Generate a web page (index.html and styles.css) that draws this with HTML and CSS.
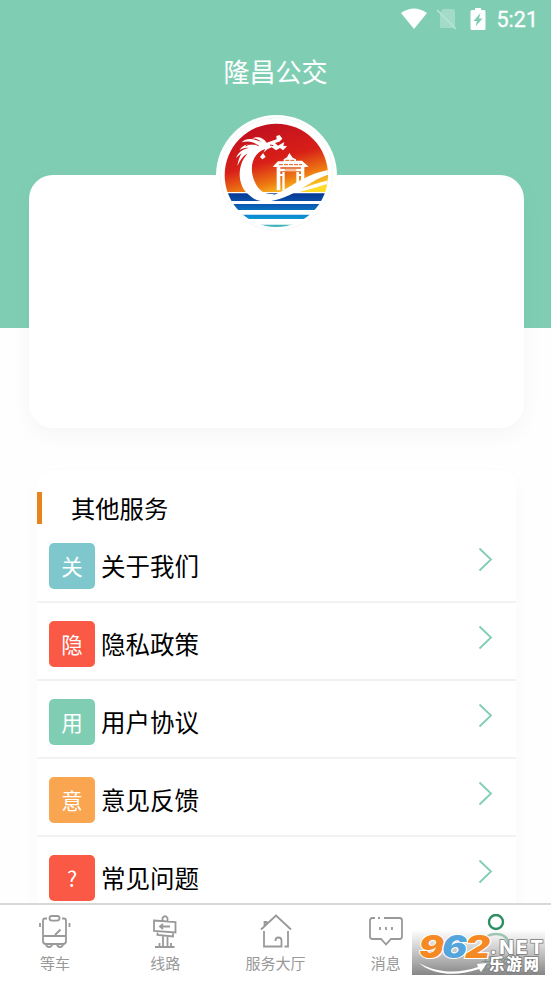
FILE: index.html
```html
<!DOCTYPE html>
<html lang="zh-CN">
<head>
    <meta charset="UTF-8">
    <meta name="viewport" content="width=device-width, initial-scale=1.0">
    <title>隆昌公交</title>
    <link rel="stylesheet" href="styles.css">
</head>
<body>
    <div class="page">
        <header class="header">
            <div class="status-bar">
                <svg class="wifi" width="28" height="22" viewBox="0 0 28 22"><path d="M1 5Q14-4 27 5L14 21Z" fill="#fff"/></svg>
                <svg class="sim" width="21" height="24" viewBox="0 0 21 24"><path d="M7 2H17Q19 2 19 4V21H4V6Z" fill="#fff" opacity=".28"/><path d="M1 3L20 22" stroke="#b9e4d3" stroke-width="1.6"/></svg>
                <svg class="battery" width="16" height="24" viewBox="0 0 16 24"><path d="M5 1H11V3H14Q15.500 3 15.500 4.500V21.500Q15.500 23 14 23H2Q.5 23 .5 21.500V4.500Q.5 3 2 3H5Z" fill="#fff"/><path d="M10.500 6L3.500 14H7L5.500 19.500L12.500 11.500H9Z" fill="#7fceb3"/></svg>
                <span class="time">5:21</span>
            </div>
            <h1>隆昌公交</h1>
        </header>

        <section class="card">
            <div class="avatar">
                <svg width="121" height="121" viewBox="30 195 363 363">
                    <defs>
                        <linearGradient id="sky" gradientUnits="userSpaceOnUse" x1="180" y1="215" x2="242" y2="440">
                            <stop offset="0" stop-color="#c01020"/>
                            <stop offset=".5" stop-color="#d81f18"/>
                            <stop offset=".78" stop-color="#ee7a12"/>
                            <stop offset="1" stop-color="#ffdc28"/>
                        </linearGradient>
                        <linearGradient id="sea" gradientUnits="userSpaceOnUse" x1="0" y1="430" x2="0" y2="535">
                            <stop offset="0" stop-color="#073a96"/>
                            <stop offset=".3" stop-color="#0a55ae"/>
                            <stop offset=".7" stop-color="#0a94d4"/>
                            <stop offset="1" stop-color="#4fbfae"/>
                        </linearGradient>
                        <clipPath id="round"><circle cx="211" cy="376" r="155"/></clipPath>
                    </defs>
                    <circle cx="211" cy="372" r="169" fill="none" stroke="#e3f1ec" stroke-width="1.500"/>
                    <g clip-path="url(#round)">
                        <path d="M50 210H380V426H50Z" fill="url(#sky)"/>
                        <path d="M50 430H380V453H50ZM50 462H380V480H50ZM50 494H380V507H50ZM50 524H380V540H50Z" fill="url(#sea)"/>
                        <!-- gate -->
                        <path d="M250 309L260 323L270 328V332H288L308 350L292 352H220L200 350L216 334H233V328L243 322ZM212 352H223V421H212ZM229 366H236V421H229ZM271 366H279V417H271ZM285 352H295V402H285ZM220 356H288V364H220ZM213 372H236V378H213ZM271 372H295V378H271Z" fill="#fff"/>
                        <path d="M238 331H265M219 344H288" stroke="#e15a16" stroke-width="3" stroke-dasharray="12 3"/>
                        <path d="M236 360H271" stroke="#e66a14" stroke-width="2.500"/>
                        <!-- waves -->
                        <path d="M120 420C142 446 183 444 219 428C268 402 315 365 380 358V371C328 381 282 426 235 442C188 461 145 461 120 424Z" fill="#fff"/>
                        <path d="M235 424C280 421 323 400 380 388V399C333 407 288 432 228 431Z" fill="#fff"/>
                        <!-- dragon -->
                        <path d="M178 297C138 308 127 358 148 399C158 421 178 436 206 431C182 453 145 452 119 425C92 393 97 339 124 312C113 315 105 327 94 348C97 331 100 320 108 310C101 314 95 319 90 324C96 307 110 298 128 294C119 291 109 295 100 301C111 281 131 282 151 283C142 275 125 272 107 277C122 262 146 267 164 275C158 267 147 266 138 265C158 258 172 264 182 278L212 268L211 258L221 255L229 266L220 275L207 279L216 287L235 276L232 287L243 289L231 301L222 294L210 301L197 292L184 298L171 309L179 321L169 328L162 321L172 308Z" fill="#fff"/>
                        <path d="M119 288C130 280 145 281 158 287M192 285L202 287" fill="none" stroke="#c91820" stroke-width="3"/>
                    </g>
                </svg>
            </div>
        </section>

        <section class="services">
            <h2>其他服务</h2>
            <ul>
                <li><span class="tag teal">关</span><span class="name">关于我们</span><svg class="arrow" width="15" height="25" viewBox="0 0 15 25"><path d="M1.500 1.500L13 12.500L1.500 23.500"/></svg></li>
                <li><span class="tag red">隐</span><span class="name">隐私政策</span><svg class="arrow" width="15" height="25" viewBox="0 0 15 25"><path d="M1.500 1.500L13 12.500L1.500 23.500"/></svg></li>
                <li><span class="tag green">用</span><span class="name">用户协议</span><svg class="arrow" width="15" height="25" viewBox="0 0 15 25"><path d="M1.500 1.500L13 12.500L1.500 23.500"/></svg></li>
                <li><span class="tag orange">意</span><span class="name">意见反馈</span><svg class="arrow" width="15" height="25" viewBox="0 0 15 25"><path d="M1.500 1.500L13 12.500L1.500 23.500"/></svg></li>
                <li><span class="tag red">?</span><span class="name">常见问题</span><svg class="arrow" width="15" height="25" viewBox="0 0 15 25"><path d="M1.500 1.500L13 12.500L1.500 23.500"/></svg></li>
            </ul>
        </section>

        <nav class="tabs">
            <a class="tab">
                <svg width="36" height="36" viewBox="0 0 36 36"><path d="M10 4.500H8Q6 4.500 6 6.500V27Q6 30 9 30H26Q29 30 29 27V6.500Q29 4.500 27 4.500H25M15 2H20Q22.500 2 22.500 4.300T20 6.600H15Q12.500 6.600 12.500 4.300T15 2ZM6 22H29M18 21L23.500 15.500M3 9V13M32.500 9V13M9 30Q9.500 33 12 33T15.500 30M20 30Q20.500 33 23 33T26.500 30"/></svg>
                <span>等车</span>
            </a>
            <a class="tab">
                <svg width="36" height="36" viewBox="0 0 36 36"><path d="M7 6.500L28.500 8V18.500L7 17ZM15.500 6.500V4Q18 .5 20.500 4V7M10.500 17.500V21L26 22.500V18.500M16 22V33M20.500 23V33M8 33H27.500M12.500 33V29M24 33V29M23 12.500H13M16 10L13 12.500L16 15"/></svg>
                <span>线路</span>
            </a>
            <a class="tab">
                <svg width="36" height="36" viewBox="0 0 36 36"><path d="M3 15.500L18 1.500L33 15.500M6.500 12V8H8.500V10M6 17V32.500H23.500V26.500Q23.500 23.500 20.500 23.500T17.500 26.500V27M30 17V32.500H26.500"/></svg>
                <span>服务大厅</span>
            </a>
            <a class="tab">
                <svg width="36" height="36" viewBox="0 0 36 36"><path d="M7 4H4.500Q2 4 2 6.500V22.500Q2 25 4.500 25H13L18 30.500L23 25H31.500Q34 25 34 22.500V6.500Q34 4 31.500 4H16M10 4H12M12 13V16M18 13V16M24 13V16"/></svg>
                <span>消息</span>
            </a>
            <a class="tab active">
                <svg width="36" height="36" viewBox="0 0 36 36"><circle cx="18" cy="8" r="7"/><path d="M5 34Q5 20 18 20T31 34" opacity=".45"/></svg>
                <span>我的</span>
            </a>
        </nav>

        <div class="watermark">
            <svg width="137" height="65" viewBox="0 0 137 65">
                <defs>
                    <linearGradient id="shade" x1="0" y1="0" x2="0" y2="1">
                        <stop offset="0" stop-color="#888" stop-opacity="0"/>
                        <stop offset="1" stop-color="#808080" stop-opacity=".95"/>
                    </linearGradient>
                </defs>
                <rect y="20" width="133" height="45" fill="url(#shade)"/>
                <path d="M7 53C25 63 46 64 66 57L65 54L75 53L69 62L67 59C45 67 20 65 7 53Z" fill="#fff"/>
                <g class="mark-num">
                    <text x="7" y="48" textLength="25" lengthAdjust="spacingAndGlyphs" fill="#f58a24">9</text>
                    <text x="30" y="48" textLength="25" lengthAdjust="spacingAndGlyphs" fill="#55a5dd">6</text>
                    <text x="53" y="48" textLength="25" lengthAdjust="spacingAndGlyphs" fill="#f58a24">2</text>
                </g>
                <text class="mark-net" x="78" y="44" textLength="53" lengthAdjust="spacing">.NET</text>
                <text class="mark-cn" x="77" y="60" textLength="50">乐游网</text>
            </svg>
        </div>
    </div>
</body>
</html>
```
FILE: styles.css
```css
* {
    box-sizing: border-box;
}
body {
    margin: 0;
    background: #fff;
    color: #000;
    font-family: "Noto Sans CJK SC", sans-serif;
}
.page {
    position: relative;
    display: flex;
    flex-direction: column;
    height: 981px;
    overflow: hidden;
    background: #fefefe;
}
.header {
    flex: none;
    height: 328px;
    background: #7fceb3;
    color: #fff;
}
.status-bar {
    display: flex;
    align-items: center;
    justify-content: flex-end;
    height: 38px;
    padding-right: 13px;
}
.sim {
    margin-left: 8px;
}
.battery {
    margin-left: 13px;
}
.time {
    margin-left: 11px;
    padding-top: 2px;
    font: 400 21.5px/38px Roboto, sans-serif;
    -webkit-text-stroke: 0.3px #fff;
}
h1 {
    margin: 15px 0 0;
    font-size: 26px;
    font-weight: 400;
    line-height: 36px;
    text-align: center;
}
.card {
    flex: none;
    display: flex;
    justify-content: center;
    height: 253px;
    margin: -153px 27px 0 29px;
    border-radius: 24px;
    background: #fff;
    box-shadow: 0 6px 22px rgba(0, 0, 0, 0.04);
}
.avatar {
    width: 121px;
    height: 121px;
    margin-top: -60px;
    border-radius: 50%;
    background: #fff;
}
.avatar svg {
    display: block;
}
.services {
    flex: 1;
    min-height: 0;
    margin: 43px 35px 0 37px;
    padding-top: 21px;
    border-radius: 14px 14px 0 0;
    background: #fff;
    box-shadow: 0 6px 20px rgba(0, 0, 0, 0.025);
}
h2 {
    height: 32px;
    margin: 0;
    padding-left: 29px;
    border-left: 5px solid #e8821b;
    font-size: 24.3px;
    font-weight: 400;
    line-height: 31px;
}
ul {
    margin: 0;
    padding: 1px 0 0;
    list-style: none;
}
li {
    display: flex;
    height: 78px;
    padding: 18px 23px 0 12px;
    border-bottom: 2px solid #f2f2f2;
}
.tag {
    width: 46px;
    height: 46px;
    border-radius: 5px;
    color: #fff;
    font-size: 21.5px;
    line-height: 45px;
    text-align: center;
}
.teal {
    background: #7ec8cd;
}
.red {
    background: #f95945;
}
.green {
    background: #7fceb3;
}
.orange {
    background: #faa550;
}
.name {
    flex: 1;
    padding-left: 6px;
    font-size: 24.5px;
    line-height: 45px;
}
.arrow {
    margin-top: 4px;
    fill: none;
    stroke: #7fceb3;
    stroke-width: 1.8;
}
.tabs {
    z-index: 1;
    flex: none;
    display: flex;
    height: 78px;
    border-top: 2px solid #d8d8d8;
    background: #fff;
}
.tab {
    flex: 1;
    display: flex;
    flex-direction: column;
    align-items: center;
    padding-top: 9px;
    color: #999;
    font-size: 15px;
    line-height: 20px;
}
.tab svg {
    margin-bottom: 3px;
    fill: none;
    stroke: #999;
    stroke-width: 1.8;
}
.tab.active {
    color: #6fae90;
}
.tab.active svg {
    stroke: #2f8d62;
    stroke-width: 2.4;
}
.watermark {
    position: absolute;
    z-index: 2;
    left: 412px;
    top: 910px;
    width: 137px;
    height: 65px;
}
.mark-num {
    font: italic 900 31px Inter, sans-serif;
    stroke: #fff;
    stroke-width: 2px;
    paint-order: stroke;
}
.mark-net {
    font: 800 19px Inter, sans-serif;
    fill: #fff;
    stroke: #777;
    stroke-width: 1.5px;
    paint-order: stroke;
}
.mark-cn {
    font: 900 15.5px "Noto Sans CJK SC", sans-serif;
    fill: #fff;
    stroke: #777;
    stroke-width: 1.5px;
    paint-order: stroke;
}
```
